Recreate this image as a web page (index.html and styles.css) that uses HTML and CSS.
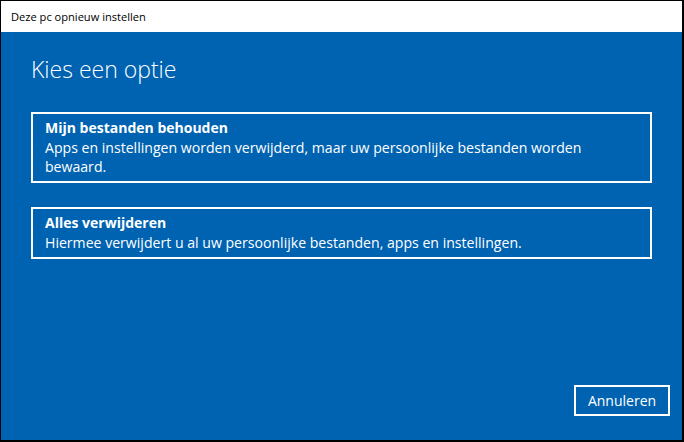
FILE: index.html
```html
<!DOCTYPE html>
<html lang="nl">
<head>
<meta charset="utf-8">
<title>Deze pc opnieuw instellen</title>
<link rel="stylesheet" href="styles.css">
</head>
<body>
<div class="window">
  <div class="titlebar">Deze pc opnieuw instellen</div>
  <div class="content">
    <h1 class="heading">Kies een optie</h1>
    <div class="options">
      <div class="option">
        <div class="option-title">Mijn bestanden behouden</div>
        <div class="option-desc">Apps en instellingen worden verwijderd, maar uw persoonlijke bestanden worden bewaard.</div>
      </div>
      <div class="option">
        <div class="option-title">Alles verwijderen</div>
        <div class="option-desc">Hiermee verwijdert u al uw persoonlijke bestanden, apps en instellingen.</div>
      </div>
    </div>
    <div class="footer">
      <button class="btn">Annuleren</button>
    </div>
  </div>
</div>
</body>
</html>
```
FILE: styles.css
```css
html, body {
  margin: 0;
  height: 100%;
}
body {
  background: #000;
  box-sizing: border-box;
  padding: 1px 2px 2px 1px;
  font-family: "Open Sans", "Noto Sans", sans-serif;
}
.window {
  height: 100%;
  display: flex;
  flex-direction: column;
  background: #0063b1;
}
.titlebar {
  height: 31px;
  background: #fff;
  color: #000;
  font-size: 11.1px;
  line-height: 31px;
  padding-left: 10px;
}
.content {
  flex: 1;
  display: flex;
  flex-direction: column;
  padding: 0 30px 0 30px;
  color: #fff;
}
.heading {
  margin: 23px 0 0 0;
  font-size: 23px;
  font-weight: 300;
  line-height: 28px;
}
.options {
  margin-top: 29px;
  display: flex;
  flex-direction: column;
  gap: 24px;
}
.option {
  border: 2px solid #fff;
  padding: 4px 12px 5px 12px;
}
.option-title {
  font-size: 14px;
  font-weight: 700;
  line-height: 20px;
}
.option-desc {
  font-size: 14.1px;
  line-height: 19px;
}
.footer {
  margin-top: auto;
  margin-right: -18px;
  margin-bottom: 24px;
  display: flex;
  justify-content: flex-end;
}
.btn {
  width: 96px;
  height: 31px;
  border: 2px solid #fff;
  background: transparent;
  color: #fff;
  font-family: inherit;
  font-size: 14px;
  padding: 0;
}
```
